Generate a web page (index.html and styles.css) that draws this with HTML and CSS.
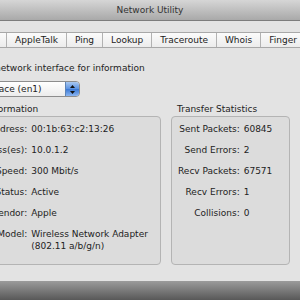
FILE: index.html
```html
<!DOCTYPE html>
<html lang="en">
<head>
  <meta charset="UTF-8">
  <title>Network Utility</title>
  <link rel="stylesheet" href="styles.css">
</head>
<body>

<div class="window">
  <div class="titlebar">Network Utility</div>

  <div class="tabs">
    <span class="tab">Info</span>
    <span class="tab">AppleTalk</span>
    <span class="tab">Ping</span>
    <span class="tab">Lookup</span>
    <span class="tab">Traceroute</span>
    <span class="tab">Whois</span>
    <span class="tab">Finger</span>
    <span class="tab">Port Scan</span>
  </div>

  <div class="content">
    <p class="intro">Please select a network interface for information</p>

    <div class="popup">
      <span class="popup-text">Network Interface (en1)</span>
      <span class="stepper">
        <svg width="7" height="11" viewBox="0 0 7 11">
          <path d="M3.5 1 L6 4 L1 4 Z" fill="#111"/>
          <path d="M3.5 10 L6 7 L1 7 Z" fill="#111"/>
        </svg>
      </span>
    </div>

    <div class="groups">
      <div class="group info">
        <div class="group-title">Interface Information</div>
        <div class="box">
          <span class="label">Hardware Address:</span><span>00:1b:63:c2:13:26</span>
          <span class="label">IP Address(es):</span><span>10.0.1.2</span>
          <span class="label">Link Speed:</span><span>300 Mbit/s</span>
          <span class="label">Link Status:</span><span>Active</span>
          <span class="label">Vendor:</span><span>Apple</span>
          <span class="label">Model:</span><span>Wireless Network Adapter<br>(802.11 a/b/g/n)</span>
        </div>
      </div>

      <div class="group stats">
        <div class="group-title">Transfer Statistics</div>
        <div class="box">
          <span class="label">Sent Packets:</span><span>60845</span>
          <span class="label">Send Errors:</span><span>2</span>
          <span class="label">Recv Packets:</span><span>67571</span>
          <span class="label">Recv Errors:</span><span>1</span>
          <span class="label">Collisions:</span><span>0</span>
        </div>
      </div>
    </div>
  </div>
</div>

</body>
</html>
```

FILE: styles.css
```css
html, body {
  margin: 0;
  height: 300px;
  overflow: hidden;
}
body {
  font-family: "DejaVu Sans", "Liberation Sans", sans-serif;
  font-size: 9px;
  line-height: 12px;
  color: #222;
  background: linear-gradient(#a2a2a2 279px, #585858 300px);
}
.window {
  margin-left: -90px;
  width: 480px;
  background-color: #e3e3e3;
}
.titlebar {
  height: 20px;
  line-height: 20px;
  text-align: center;
  color: #333;
  background: linear-gradient(#d6d6d6, #a9a9a9);
  border-bottom: 1px solid #7c7c7c;
}
.tabs {
  display: flex;
  margin-top: 11px;
  margin-left: 63px;
  height: 14px;
  line-height: 14px;
  border-top: 1px solid #a8a8a8;
  border-bottom: 1px solid #a8a8a8;
  background: linear-gradient(#fbfbfb, #ececec);
}
.tab {
  padding: 0 8px;
  border-right: 1px solid #b2b2b2;
}
.content {
  padding: 14px 0 16px 15px;
}
.intro {
  margin: 0;
}
.popup {
  display: flex;
  align-items: center;
  justify-content: space-between;
  box-sizing: border-box;
  width: 155px;
  height: 16px;
  margin-top: 7px;
  padding-left: 8px;
  border: 1px solid #8d8d8d;
  border-radius: 4px;
  background: linear-gradient(#ffffff, #ececec);
  overflow: hidden;
}
.stepper {
  display: flex;
  align-items: center;
  justify-content: center;
  width: 13px;
  height: 14px;
  border-left: 1px solid #5c84b8;
  background: linear-gradient(#a9c8f0, #5a92e2 50%, #3a78d4 51%, #8bb6f2);
}
.groups {
  display: flex;
  gap: 10px;
  margin-top: 6px;
  margin-left: 10px;
}
.group-title {
  padding-left: 8px;
  margin-bottom: 1px;
}
.stats .group-title {
  padding-left: 6px;
}
.info {
  width: 226px;
}
.stats {
  width: 119px;
}
.box {
  display: grid;
  grid-template-columns: auto 1fr;
  column-gap: 4px;
  row-gap: 9px;
  align-content: start;
  box-sizing: border-box;
  height: 149px;
  padding: 6px 0 0 6px;
  border: 1px solid #b4b4b4;
  border-radius: 4px;
  background-color: #dcdcdc;
}
.label {
  text-align: right;
}
```
